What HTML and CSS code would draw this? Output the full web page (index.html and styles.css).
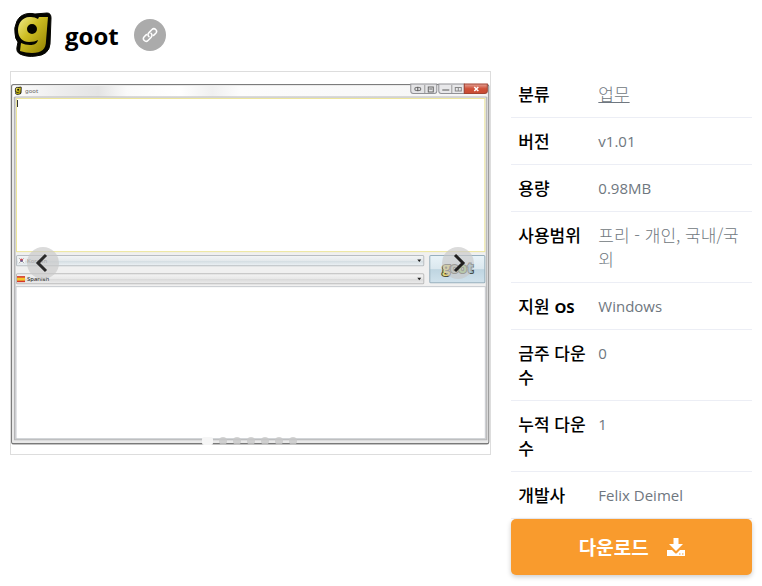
FILE: index.html
```html
<!DOCTYPE html>
<html lang="ko">
<head>
<meta charset="utf-8">
<meta name="viewport" content="width=device-width, initial-scale=1">
<title>goot</title>
<link rel="stylesheet" href="styles.css">
</head>
<body>
<header class="head">
  <svg class="logo" viewBox="0 0 42 48" aria-hidden="true">
    <defs>
      <linearGradient id="gold" x1="0" y1="0" x2="1" y2="1">
        <stop offset="0" stop-color="#f0eb8c"/>
        <stop offset=".4" stop-color="#cdbd22"/>
        <stop offset="1" stop-color="#918000"/>
      </linearGradient>
    </defs>
    <g id="g-mark">
      <path d="M4 13C6 4 15 1 23 3L35 2Q39 2 39 7L38 33Q37 44 24 45C18 46 12 45 8 43Q4 41 5 36L6 31Q3 28 3 22Q2 17 4 13Z" fill="#050500" stroke="#050500" stroke-linejoin="round"/>
      <path fill-rule="evenodd" d="M19 6C11 5 6 12 6 19C6 27 11 31 17 31C21 31 24 30 26 29C25 33 22 34 18 34Q13 34 9 32L8 40Q14 42 20 42C30 42 34 38 34 30L36 6H27L26 8Q23 6 19 6ZM20 13A5 5 0 0 1 20 23A5 5 0 0 1 20 13Z" fill="url(#gold)"/>
    </g>
  </svg>
  <h1 class="title">goot</h1>
  <a class="link" href="#" aria-label="링크">
    <svg viewBox="0 0 16 16" aria-hidden="true"><g fill="none" stroke="#fff" stroke-width="1.5" stroke-linecap="round"><path d="M7 9.8A3 3 0 0 1 7 5.6L10 2.6A2.5 2.5 0 0 1 13.8 6.2L11.6 8.4"/><path d="M9 6.2A3 3 0 0 1 9 10.4L6 13.4A2.5 2.5 0 0 1 2.2 9.8L4.4 7.6"/></g></svg>
  </a>
</header>
<main class="content">
  <section class="gallery">
    <svg class="shot" viewBox="11 72 479 382" role="img" aria-label="goot">
      <defs>
        <linearGradient id="bar" x1="0" x2="1" y1="0" y2="0">
          <stop offset="0" stop-color="#fcfcfc"/><stop offset=".1" stop-color="#ededed"/><stop offset=".18" stop-color="#e4e4e4"/><stop offset=".24" stop-color="#fafafa"/><stop offset=".35" stop-color="#fff"/><stop offset=".42" stop-color="#f0f0f0"/><stop offset=".48" stop-color="#fcfcfc"/><stop offset="1" stop-color="#f5f5f5"/>
        </linearGradient>
        <linearGradient id="combo" x1="0" x2="0" y1="0" y2="1"><stop offset="0" stop-color="#f3f5f6"/><stop offset=".5" stop-color="#e4e9ec"/><stop offset=".55" stop-color="#d4dde2"/><stop offset="1" stop-color="#edf2f5"/></linearGradient>
        <linearGradient id="combo2" x1="0" x2="0" y1="0" y2="1"><stop offset="0" stop-color="#f5f5f5"/><stop offset=".5" stop-color="#e8e8e8"/><stop offset=".55" stop-color="#d9d9d9"/><stop offset="1" stop-color="#ededed"/></linearGradient>
        <linearGradient id="go" x1="0" x2="0" y1="0" y2="1"><stop offset="0" stop-color="#e9f3f8"/><stop offset=".48" stop-color="#dbe8ef"/><stop offset=".52" stop-color="#bfd5e1"/><stop offset="1" stop-color="#d0e2ec"/></linearGradient>
        <linearGradient id="red" x1="0" x2="0" y1="0" y2="1"><stop offset="0" stop-color="#e4a195"/><stop offset=".5" stop-color="#cf5138"/><stop offset="1" stop-color="#c94b32"/></linearGradient>
      </defs>
      <rect x="11.500" y="84.500" width="477" height="359" rx="2" fill="#e9e9e9" stroke="#7c7c7c"/>
      <rect x="13" y="86" width="474" height="11" fill="url(#bar)"/>
      <path d="M12 443.500H488" stroke="#6f6f6f"/>
      <path d="M14.500 97V440M486.500 97V440M14 439.500H487" stroke="#b2b2b6" fill="none"/>
      <rect x="15" y="97" width="471" height="342" fill="#f0f0f0" stroke="#b8b8b8"/>
      <rect x="16.500" y="98.500" width="468" height="153" fill="#fff" stroke="#ece59a"/>
      <path d="M17.500 100V107" stroke="#333"/>
      <rect x="16" y="286.500" width="469" height="152" fill="#fff" stroke="#c6c9ce"/>
      <use href="#g-mark" transform="translate(14.500 86.500) scale(.18)"/>
      <text x="25" y="93" class="tiny muted">goot</text>
      <g>
        <path d="M410.500 84V91Q410.500 93.500 413 93.500H434Q436.500 93.500 436.500 91V84Z" fill="#e4e4e6" stroke="#919196"/>
        <path d="M424.500 85V93" stroke="#999"/>
        <ellipse cx="417.500" cy="89" rx="3" ry="1.700" fill="none" stroke="#777"/><path d="M417.500 87V91" stroke="#555"/>
        <path d="M428 87H433V92H428ZM429 89H432" fill="none" stroke="#666"/>
        <path d="M438.500 84V91Q438.500 93.500 441 93.500H464V84Z" fill="#e8e8ea" stroke="#919196"/>
        <path d="M451.500 85V93" stroke="#999"/><path d="M442 90H449" stroke="#888" stroke-width="1.500"/>
        <path d="M455 87.500H461V91H455ZM458 87V91" fill="none" stroke="#888"/>
        <path d="M464 84H487V91Q487 93.500 484 93.500H464Z" fill="url(#red)" stroke="#a24332"/>
        <path d="M474 87L478 91M478 87L474 91" stroke="#fff" stroke-width="1.500"/>
      </g>
      <rect x="16.500" y="255.500" width="407" height="10" rx="1" fill="url(#combo)" stroke="#b9bec2"/>
      <rect x="16.500" y="273.500" width="407" height="10" rx="1" fill="url(#combo2)" stroke="#bcbcbc"/>
      <path d="M417 259.500H421L419 262ZM417 277.500H421L419 280Z" fill="#222"/>
      <rect x="18" y="258" width="7" height="5" fill="#f5f5f5"/><path d="M19 258L24 263M24 258L19 263" stroke="#888" stroke-width=".7"/><circle cx="21.500" cy="260" r="1.500" fill="#cf4b55"/><path d="M20 260.500H23Q22 263 20 260.500" fill="#345ba5"/>
      <text x="27" y="263" class="tiny muted">Korean</text>
      <rect x="17" y="276" width="8" height="6" fill="#d4362b"/><rect x="17" y="277.500" width="8" height="3" fill="#f4c52e"/>
      <text x="27" y="281" class="tiny">Spanish</text>
      <rect x="429.500" y="255.500" width="55" height="27" rx="1" fill="url(#go)" stroke="#98b0bd"/>
      <g stroke="#4b4b3c" stroke-width="2" class="mark" paint-order="stroke">
        <text x="442" y="273" fill="#e4d777">g</text><text x="450" y="273" fill="#b5b8a8">o</text><text x="458" y="273" fill="#9bc878">o</text><text x="467" y="273" fill="#8dbbd6">t</text>
      </g>
    </svg>
    <button class="nav prev" type="button" aria-label="이전"><svg viewBox="0 0 32 32" aria-hidden="true"><path d="M19 8L11 16L19 24" fill="none" stroke="#292929" stroke-width="3"/></svg></button>
    <button class="nav next" type="button" aria-label="다음"><svg viewBox="0 0 32 32" aria-hidden="true"><path d="M13 8L21 16L13 24" fill="none" stroke="#202020" stroke-width="3"/></svg></button>
    <div class="dots"><i class="dot active"></i><i class="dot"></i><i class="dot"></i><i class="dot"></i><i class="dot"></i><i class="dot"></i><i class="dot"></i></div>
  </section>
  <aside class="info">
    <table class="specs">
      <tbody>
        <tr><th scope="row">분류</th><td class="korean"><a href="#">업무</a></td></tr>
        <tr><th scope="row">버전</th><td>v1.01</td></tr>
        <tr><th scope="row">용량</th><td>0.98MB</td></tr>
        <tr><th scope="row">사용범위</th><td class="korean">프리 - 개인, 국내/국외</td></tr>
        <tr><th scope="row">지원 <span class="latin">OS</span></th><td>Windows</td></tr>
        <tr><th scope="row">금주 다운수</th><td>0</td></tr>
        <tr><th scope="row">누적 다운수</th><td>1</td></tr>
        <tr><th scope="row">개발사</th><td>Felix Deimel</td></tr>
      </tbody>
    </table>
    <button class="download" type="button">다운로드
      <svg viewBox="0 0 18 18" aria-hidden="true"><path fill="#fff" d="M6.500 0H11.500V6H16L9 13L2 6H6.500ZM0 12H5L8 15Q9 16 10 15L13 12H18V18H0Z"/><path d="M12 16H13.500M15 16H16.500" stroke="#f99b2d" stroke-width="1"/></svg>
    </button>
  </aside>
</main>
</body>
</html>
```
FILE: styles.css
```css
* { box-sizing: border-box; }

body {
  margin: 0;
  padding: 10px;
  background: #fff;
  color: #000;
  font: 15px/24px "Open Sans", "Noto Sans CJK KR", sans-serif;
}

.head {
  display: flex;
  align-items: center;
  height: 50px;
  margin-bottom: 11px;
  padding-left: 2px;
}

.logo { width: 42px; height: 48px; }

.title {
  margin: 0 15px 0 11px;
  padding-top: 2px;
  font: bold 24px/32px "Open Sans", "Noto Sans", sans-serif;
}

.link {
  display: flex;
  align-items: center;
  justify-content: center;
  width: 32px;
  height: 32px;
  border-radius: 50%;
  background: #ababab;
}

.link svg { width: 16px; height: 16px; }

.content {
  display: grid;
  grid-template-columns: 2fr 1fr;
  gap: 20px;
  align-items: start;
}

.gallery {
  position: relative;
  border: 1px solid #ddd;
}

.shot { display: block; width: 100%; height: auto; }

.tiny { font: 6px "Noto Sans", sans-serif; fill: #222; }
.muted { fill: #666; }
.mark { font: bold 14px "Open Sans", sans-serif; }

.nav {
  position: absolute;
  top: 50%;
  width: 32px;
  height: 32px;
  margin-top: -16px;
  padding: 0;
  border: 0;
  border-radius: 50%;
  background: rgba(200, 200, 200, .65);
}

.nav svg { display: block; width: 32px; height: 32px; }
.prev { left: 16px; }
.next { right: 16px; }

.dots {
  position: absolute;
  right: 0;
  bottom: 9px;
  left: 0;
  display: flex;
  justify-content: center;
  gap: 6px;
  padding-right: 2px;
}

.dot {
  width: 8px;
  height: 8px;
  border-radius: 50%;
  background: rgba(200, 200, 200, .8);
}

.dot.active { width: 11px; border-radius: 2px; background: #f6f6f6; }

.specs {
  width: 100%;
  border-collapse: separate;
  border-spacing: 0;
  table-layout: fixed;
}

.specs th,
.specs td {
  padding: 11px 0 11px 8px;
  border-bottom: 1px solid #eceef5;
  line-height: 24px;
  text-align: left;
  vertical-align: top;
  word-break: break-all;
}

.specs th {
  width: 79px;
  padding-left: 7px;
  font: 500 17px/24px "Noto Sans CJK KR", sans-serif;
}

.specs td { color: #6f7780; }

.specs .korean {
  padding-right: 8px;
  font: 300 17px/24px "Noto Sans CJK KR", sans-serif;
}

.specs a { color: inherit; }

.latin { font: bold 15px/16px "Open Sans", sans-serif; }

.download {
  display: flex;
  align-items: center;
  justify-content: center;
  gap: 18px;
  width: 100%;
  height: 56px;
  border: 0;
  border-radius: 5px;
  background: #f99b2d;
  box-shadow: 0 2px 5px rgba(0, 0, 0, .2);
  color: #fff;
  font: bold 19px/24px "Noto Sans CJK KR", sans-serif;
}

.download svg { width: 18px; height: 18px; }
```
